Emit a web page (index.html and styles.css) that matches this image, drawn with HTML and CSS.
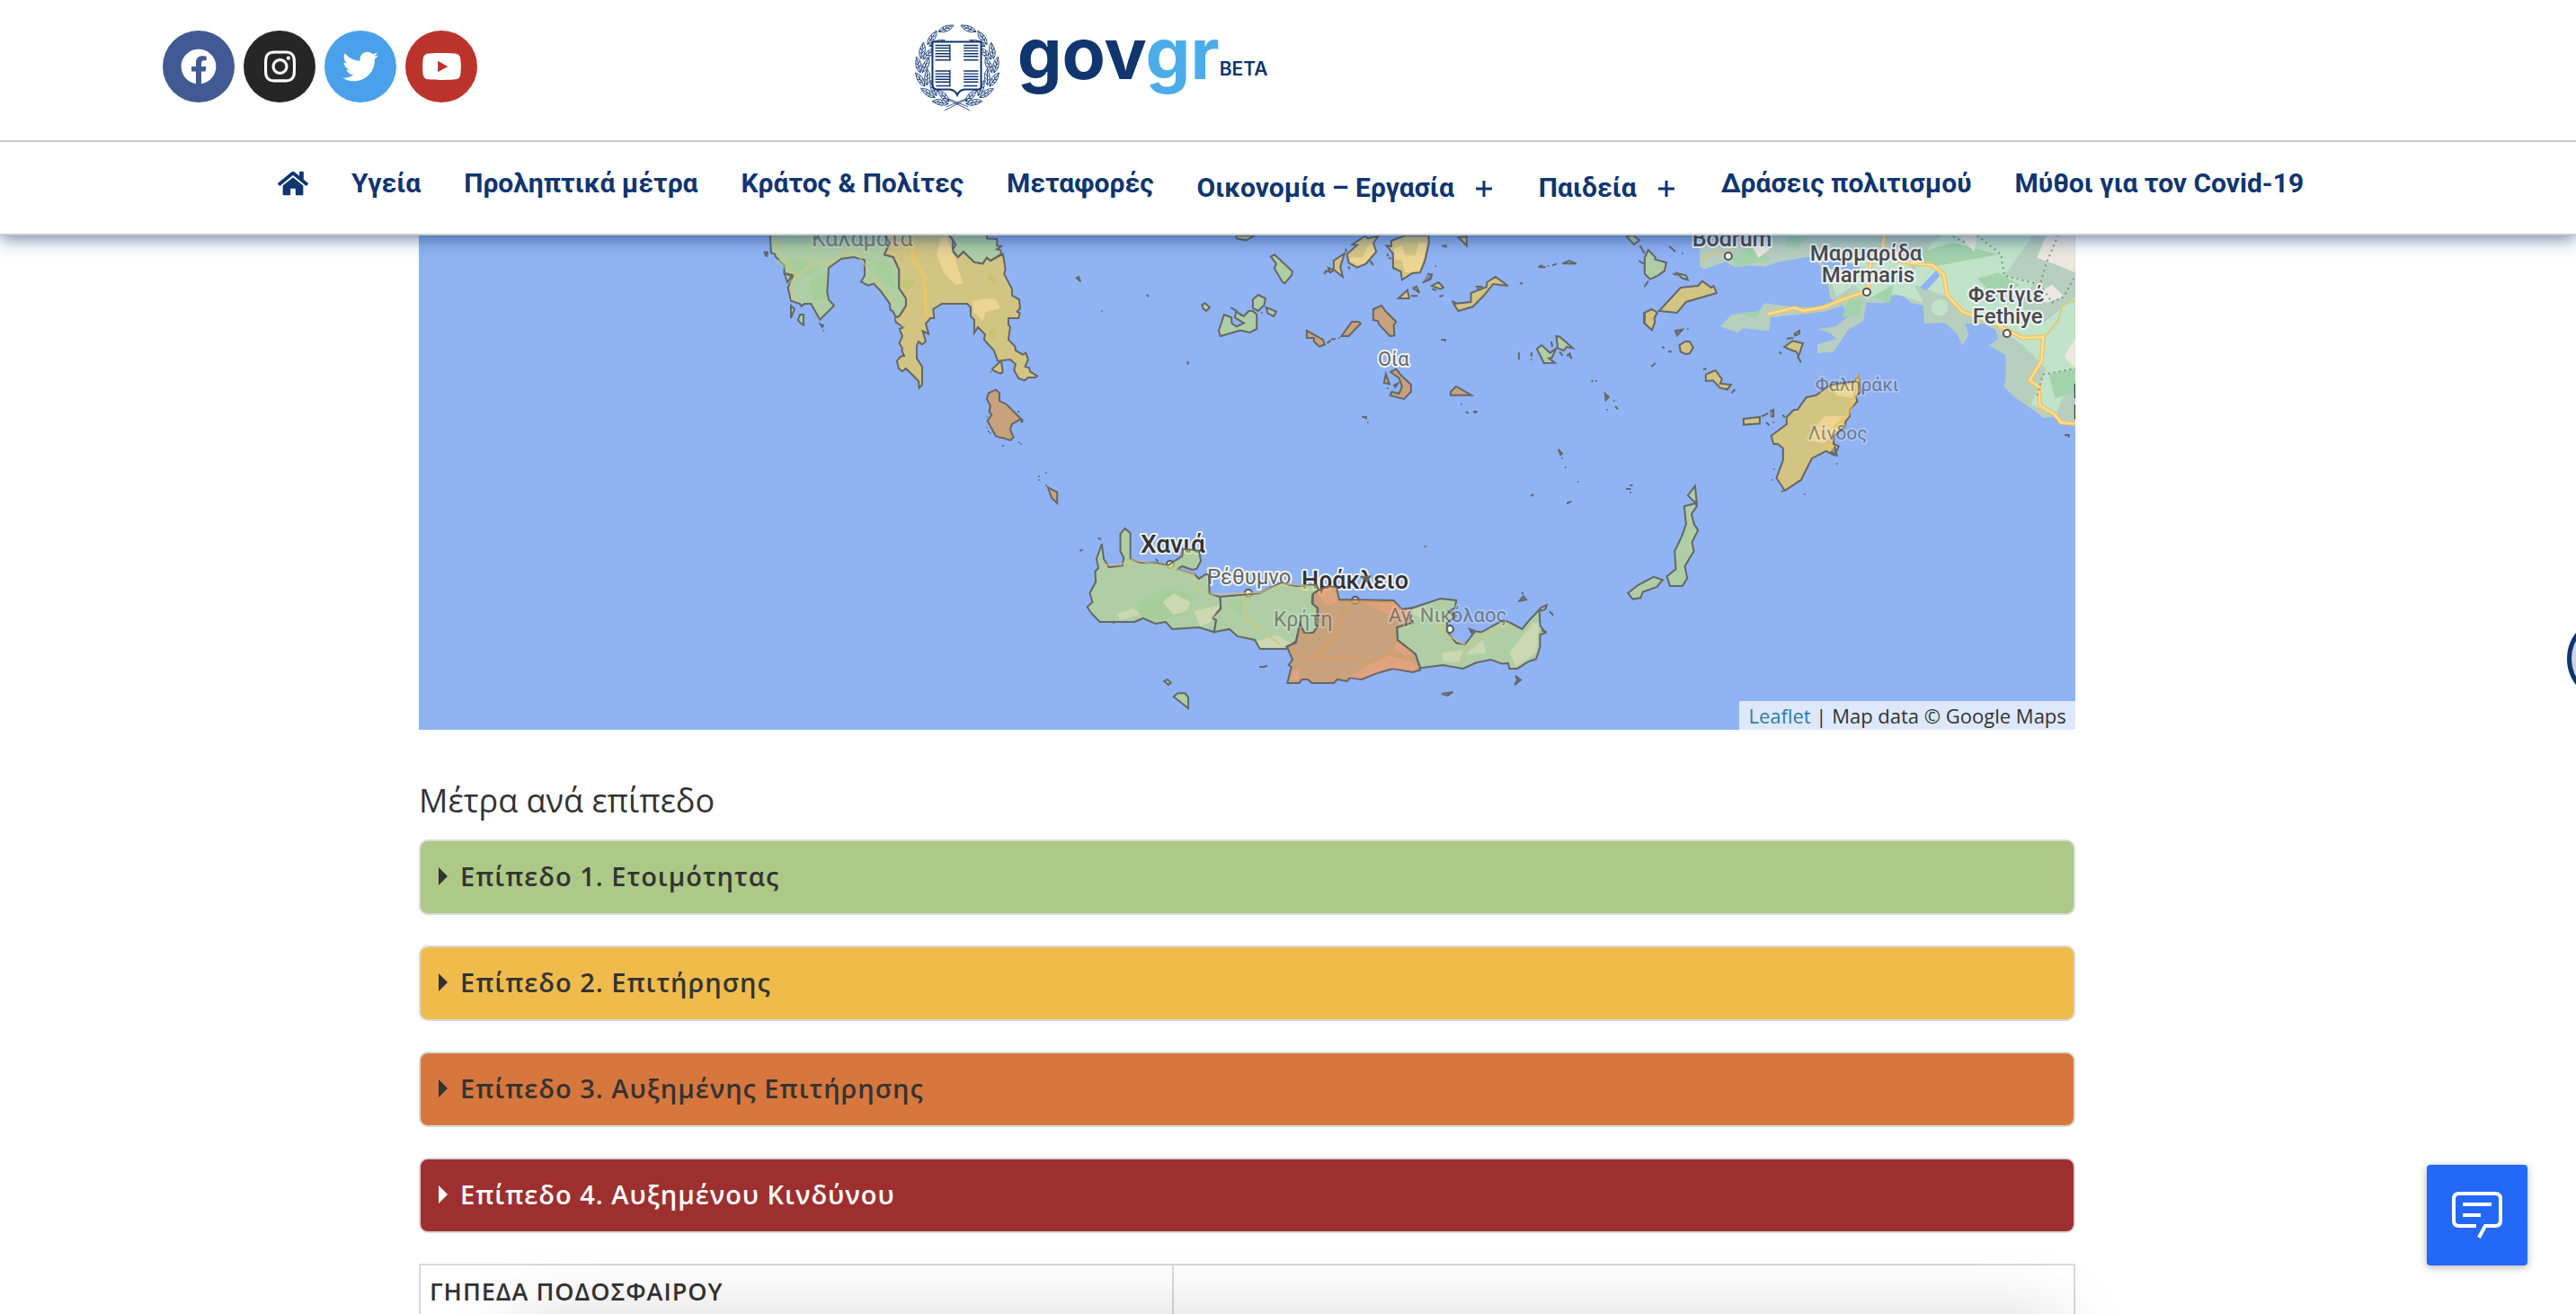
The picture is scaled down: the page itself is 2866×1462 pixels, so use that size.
FILE: index.html
```html
<!DOCTYPE html>
<html lang="el">
<head>
<meta charset="utf-8" />
<meta name="viewport" content="width=device-width, initial-scale=1" />
<title>Μέτρα ανά επίπεδο - govgr</title>
<link rel="stylesheet" href="styles.css">
</head>
<body>
<header class="site-header">
<div class="header-top">
<div class="social">
<a class="social-link facebook" href="#" aria-label="Facebook"><svg viewBox="0 0 512 512"><path d="M504 256C504 119 393 8 256 8S8 119 8 256c0 123.780 90.690 226.380 209.250 245V327.690h-63V256h63v-54.640c0-62.150 37-96.480 93.670-96.480 27.140 0 55.520 4.840 55.520 4.840v61h-31.280c-30.800 0-40.410 19.120-40.410 38.730V256h68.780l-11 71.690h-57.780V501C413.310 482.380 504 379.780 504 256z"/></svg></a>
<a class="social-link instagram" href="#" aria-label="Instagram"><svg viewBox="0 0 448 512"><path d="M224.100 141c-63.600 0-114.900 51.300-114.900 114.900s51.300 114.900 114.900 114.900S339 319.500 339 255.900 287.700 141 224.100 141zm0 189.600c-41.100 0-74.700-33.500-74.700-74.700s33.500-74.700 74.700-74.700 74.700 33.500 74.700 74.700-33.600 74.700-74.700 74.700zm146.400-194.300c0 14.900-12 26.800-26.800 26.800-14.900 0-26.800-12-26.800-26.800s12-26.800 26.800-26.800 26.800 12 26.800 26.800zm76.100 27.200c-1.700-35.900-9.900-67.700-36.200-93.900-26.200-26.200-58-34.400-93.900-36.200-37-2.100-147.900-2.100-184.900 0-35.800 1.700-67.600 9.900-93.900 36.100s-34.400 58-36.200 93.900c-2.100 37-2.100 147.900 0 184.900 1.700 35.900 9.900 67.700 36.200 93.900s58 34.400 93.900 36.200c37 2.100 147.900 2.100 184.900 0 35.900-1.700 67.700-9.900 93.900-36.200 26.200-26.200 34.400-58 36.200-93.900 2.100-37 2.100-147.800 0-184.800zM398.800 388c-7.800 19.600-22.900 34.700-42.600 42.600-29.500 11.700-99.500 9-132.100 9s-102.700 2.600-132.100-9c-19.600-7.800-34.700-22.900-42.600-42.600-11.700-29.500-9-99.500-9-132.100s-2.600-102.700 9-132.100c7.800-19.600 22.900-34.700 42.600-42.600 29.500-11.700 99.500-9 132.100-9s102.700-2.600 132.100 9c19.600 7.800 34.700 22.900 42.600 42.600 11.700 29.500 9 99.500 9 132.100s2.700 102.700-9 132.100z"/></svg></a>
<a class="social-link twitter" href="#" aria-label="Twitter"><svg viewBox="0 0 512 512"><path d="M459.370 151.716c.325 4.548.325 9.097.325 13.645 0 138.720-105.583 298.558-298.558 298.558-59.452 0-114.680-17.219-161.137-47.106 8.447.974 16.568 1.299 25.340 1.299 49.055 0 94.213-16.568 130.274-44.832-46.132-.975-84.792-31.188-98.112-72.772 6.498.974 12.995 1.624 19.818 1.624 9.421 0 18.843-1.300 27.614-3.573-48.081-9.747-84.143-51.980-84.143-102.985v-1.299c13.969 7.797 30.214 12.670 47.431 13.319-28.264-18.843-46.781-51.005-46.781-87.391 0-19.492 5.197-37.360 14.294-52.954 51.655 63.675 129.300 105.258 216.365 109.807-1.624-7.797-2.599-15.918-2.599-24.040 0-57.828 46.782-104.934 104.934-104.934 30.213 0 57.502 12.670 76.670 33.137 23.715-4.548 46.456-13.320 66.599-25.340-7.798 24.366-24.366 44.833-46.132 57.827 21.117-2.273 41.584-8.122 60.426-16.243-14.292 20.791-32.161 39.308-52.628 54.253z"/></svg></a>
<a class="social-link youtube" href="#" aria-label="YouTube"><svg viewBox="0 0 576 512"><path d="M549.655 124.083c-6.281-23.650-24.787-42.276-48.284-48.597C458.781 64 288 64 288 64S117.220 64 74.629 75.486c-23.497 6.322-42.003 24.947-48.284 48.597-11.412 42.867-11.412 132.305-11.412 132.305s0 89.438 11.412 132.305c6.281 23.650 24.787 41.500 48.284 47.821C117.220 448 288 448 288 448s170.780 0 213.371-11.486c23.497-6.321 42.003-24.171 48.284-47.821 11.412-42.867 11.412-132.305 11.412-132.305s0-89.438-11.412-132.305zm-317.510 213.508V175.185l142.739 81.205-142.739 81.201z"/></svg></a>
</div>
<a class="logo" href="#">
<svg class="emblem" viewBox="0 0 96 96" aria-hidden="true">
<defs>
<g id="leaf"><path d="M-9 0Q-3-6 9-1Q1 6-9 0ZM-9 0L7-1M-4 0l2-3M-1 0l3-3M-3 0l3 2M1 0l3 1"/></g>
<g id="pair"><use href="#leaf" transform="translate(48 6) rotate(-14)"/><use href="#leaf" transform="translate(48 14) rotate(22)"/></g>
<g id="branch">
<use href="#leaf" transform="translate(36 6) rotate(-20)"/>
<use href="#pair" transform="rotate(-40 48 48)"/>
<use href="#pair" transform="rotate(-64 48 48)"/>
<use href="#pair" transform="rotate(-86 48 48)"/>
<use href="#pair" transform="rotate(-108 48 48)"/>
<use href="#pair" transform="rotate(-131 48 48)"/>
<use href="#pair" transform="rotate(-154 48 48)"/>
<path d="M34 95l28-14M36 91l22-9"/>
</g>
</defs>
<g class="wreath"><use href="#branch"/><use href="#branch" transform="translate(96 0) scale(-1 1)"/></g>
<path class="shield" d="M21 20H74V69Q74 72 70 72H56Q50 73 48 78Q46 73 40 72H26Q21 72 21 66Z"/>
<path class="stripes" d="M24 24h16M24 27h16M24 30h16M24 33h16M24 36h16M24 40h16M55 24h16M55 27h16M55 30h16M55 33h16M55 36h16M55 40h16M24 52h16M24 55h16M24 58h16M24 61h16M24 64h16M25 68h15M55 52h16M55 55h16M55 58h16M55 61h16M55 64h16M55 68h15M40 23v18M40 51v18"/>
</svg>
<span class="logo-text">gov<span class="logo-light">gr</span></span><span class="logo-beta">BETA</span>
</a>
</div>
<nav class="main-nav">
<ul>
<li><a href="#" aria-label="Αρχική"><svg class="home-icon" viewBox="0 0 576 512"><path d="M280.370 148.260L96 300.110V464a16 16 0 0 0 16 16l112.060-.290a16 16 0 0 0 15.920-16V368a16 16 0 0 1 16-16h64a16 16 0 0 1 16 16v95.640a16 16 0 0 0 16 16.050L464 480a16 16 0 0 0 16-16V300L295.670 148.260a12.190 12.190 0 0 0-15.300 0zM571.600 251.470L488 182.560V44.050a12 12 0 0 0-12-12h-56a12 12 0 0 0-12 12v72.610L318.470 43a48 48 0 0 0-61 0L4.340 251.470a12 12 0 0 0-1.600 16.900l25.500 31A12 12 0 0 0 45.150 301l235.220-193.740a12.190 12.190 0 0 1 15.300 0L530.900 301a12 12 0 0 0 16.900-1.600l25.500-31a12 12 0 0 0-1.700-16.930z"/></svg></a></li>
<li><a href="#">Υγεία</a></li>
<li><a href="#">Προληπτικά μέτρα</a></li>
<li><a href="#">Κράτος &amp; Πολίτες</a></li>
<li><a href="#">Μεταφορές</a></li>
<li class="has-sub"><a href="#">Οικονομία – Εργασία<svg class="plus" viewBox="0 0 18 18"><path d="M9 0V18M0 9H18"/></svg></a></li>
<li class="has-sub"><a href="#">Παιδεία<svg class="plus" viewBox="0 0 18 18"><path d="M9 0V18M0 9H18"/></svg></a></li>
<li><a href="#">Δράσεις πολιτισμού</a></li>
<li><a href="#">Μύθοι για τον Covid-19</a></li>
</ul>
</nav>
</header>

<main>
<div class="map">
<svg viewBox="0 0 1843 550" role="img" aria-label="Χάρτης επιπέδων">
<!-- Turkish coast -->
<g transform="translate(1364 -12) scale(.3333)">
<path class="land" d="M180 30L186 140 200 150 230 138 270 124 300 142 350 136 400 140 440 126 520 112 556 106 600 150 612 200 620 245 640 262 600 276 500 275 400 262 380 290 290 300 252 340 310 360 330 346 415 355 420 310 600 290 660 270 680 306 640 340 578 348 620 362 640 380 576 400 578 430 630 424 680 350 730 320 740 260 800 262 820 240 850 228 890 262 930 270 932 330 1000 328 1040 360 1060 402 1082 370 1070 330 1130 330 1170 350 1180 380 1150 404 1205 436 1205 520 1198 540 1240 580 1300 620 1330 645 1370 640 1400 665 1437 665V30Z"/>
<path class="land-light" d="M610 150L700 110 840 100 900 150 960 60 1000 30H1300L1200 170 1300 190 1250 270 1330 330 1437 240V480L1370 640 1290 600 1340 480 1260 400 1160 330 1080 300 1010 240 900 200 930 262 870 240 800 226 740 250 700 200 640 240Z"/>
<path class="land-dark" d="M760 240L830 200 820 262ZM890 100L1030 60 1180 100 960 140ZM290 110L360 70 420 116 300 140ZM480 36L540 40 510 80 470 70ZM1110 180L1180 160 1250 200 1180 250ZM680 250L730 250 720 300 660 310ZM310 296L386 288 370 312ZM1350 500L1437 480V560L1370 580Z"/>
<path class="land-sand" d="M1340 36L1437 36 1437 160 1390 140 1310 110ZM1400 440L1437 380V480ZM1310 230L1360 200 1400 240 1340 260ZM350 60L420 80 380 110ZM1050 40L1110 36 1100 90Z"/>
<path class="water" d="M975 150L985 172 940 220 918 210ZM560 106L640 110 720 140 700 180 640 160Z"/>
<circle class="land-light" cx="985" cy="276" r="28"/>
<path class="road-edge" d="M800 36L795 80 755 120 745 220 660 250 600 275 530 288 500 278 412 298M800 110L900 130 960 135 998 165 1010 235 1060 290 1180 335 1260 378 1330 375 1325 455 1285 520 1315 540 1320 605 1365 630 1390 660 1437 665"/>
<path class="road" d="M800 36L795 80 755 120 745 220 660 250 600 275 530 288 500 278 412 298M800 110L900 130 960 135 998 165 1010 235 1060 290 1180 335 1260 378 1330 375 1325 455 1285 520 1315 540 1320 605 1365 630 1390 660 1437 665"/>
<path class="road-thin" d="M186 130L200 110 245 90 278 96 305 74M1340 370L1380 320 1395 270 1437 250"/>
<path class="border" d="M1110 36L1190 100 1200 170 1320 200 1340 130 1380 36M1320 200L1360 260 1400 240 1437 170M1310 570L1330 500 1437 480M1030 40L1070 60"/>
<path class="edge-mark" d="M1437 530V580M1437 600V650"/>
</g>
<g class="labels">
<text x="1417" y="12" font-size="25">Bodrum</text>
<text x="1548" y="28" font-size="24">Μαρμαρίδα</text>
<text x="1561" y="52" font-size="24">Marmaris</text>
<text x="1724" y="74" font-size="24">Φετίγιέ</text>
<text x="1729" y="98" font-size="24">Fethiye</text>
<text class="minor" x="1067" y="145" font-size="22">Οία</text>
<text class="major" x="803" y="353" font-size="28">Χανιά</text>
<text class="minor" x="877" y="388" font-size="24">Ρέθυμνο</text>
<text class="major" x="982" y="393" font-size="27">Ηράκλειο</text>
</g>
<g class="towns">
<circle cx="1457" cy="23" r="4"/><circle cx="1611" cy="63" r="4"/><circle cx="1767" cy="109" r="4"/>
<circle cx="836" cy="366" r="4"/><circle cx="923" cy="398" r="4"/><circle cx="1042" cy="406" r="4"/><circle cx="1147" cy="438" r="4"/>
</g>
<!-- Peloponnese, Kythira -->
<g class="regions" transform="translate(364 -12) scale(.3333)">
<path class="lvl1" d="M80 30L84 94 96 98 100 108 128 136 128 162 158 168 150 190 140 210 150 254 180 264 185 272 195 264 217 264 247 317 294 270 276 250 271 224 276 144 318 114 360 108 396 118 396 170 384 190 408 203 426 197 450 222 480 264 482 285 490 288 500 308 512 305 528 285 534 270 534 246 511 212 511 150 492 108 462 100 480 62 462 30Z"/>
<path class="lvl2" d="M462 30L480 62 462 100 492 108 511 150 511 212 534 246 534 270 512 305 498 312 500 325 526 342 512 348 522 372 512 396 522 412 520 420 528 438 516 440 504 455 510 480 522 490 534 480 576 522 578 545 588 535 588 474 570 446 570 405 576 390 588 400 600 390 590 355 610 365 600 330 616 312 628 312 625 282 654 264 738 264 750 275 750 305 762 318 762 362 774 342 798 366 795 384 828 420 840 455 882 450 900 466 895 486 910 513 930 520 942 510 966 510 972 505 948 490 946 478 932 474 942 450 934 428 924 434 900 420 898 406 876 384 882 342 876 334 876 312 910 312 914 295 905 290 915 280 912 250 888 236 888 215 862 165 866 150 858 98 816 120 804 110 790 130 762 125 726 90 708 108 690 90 690 50 675 30Z"/>
<path class="lvl1" d="M675 30L690 50 700 66 690 85 708 108 726 90 762 125 790 130 804 110 816 120 852 98 850 85 838 82 852 72 838 70 838 48 804 46 804 30Z"/>
<path class="lvl2" d="M822 482L846 460 853 460 857 492 850 497 828 488Z"/>
<path class="lvl3" d="M810 562L834 551 846 562 846 588 870 600 918 648 888 666 882 684 893 710 882 720 858 712 846 710 834 706 806 655 820 635 812 624 816 605 804 582Z"/>
<path class="lvl3" d="M1008 877L1039 893V930L1020 912Z"/>
<path class="lvl1" d="M174 318L180 300 192 300V335L178 324ZM150 270L162 282 150 312ZM128 162L152 172 138 192Z"/>
<path d="M62 92L72 92 70 104 66 104ZM248 332L258 336 254 342ZM1104 178L1110 174 1117 190ZM1337 234L1345 240M1475 455V467M1186 288h4M256 353h4M1000 828h4M976 840h4M976 852h4M1000 870h4M803 642h3M803 678h3M808 690h4M813 696h4M907 624h6M855 738h5M909 726h4M916 732h4M915 650L925 660M919 660L923 648M815 491h4"/>
</g>
<g class="relief" transform="translate(364 -12) scale(.3333)">
<path class="peach" d="M650 42L668 36 690 90 724 196 700 200 660 160 636 100ZM755 255L800 246 835 250 848 278 800 292 790 322 760 290Z"/>
<path class="olive" d="M515 180L565 185 550 215 515 205ZM808 160L836 185 835 200 808 180ZM810 360L820 346 835 350 830 380 812 382Z"/>
<path class="moss" d="M90 120L160 110 250 140 220 170 150 160ZM400 110L480 130 500 210 470 200ZM210 190L265 160 268 250 230 250Z"/>
<path class="road" d="M550 36L560 120 595 170 600 280 608 305"/>
<path class="road-thin" d="M92 36L105 80 165 175 150 190 154 252M165 175L228 128 290 124 330 94 380 86M330 80L380 110 430 180 500 270M500 312L528 342 600 318 618 290"/>
</g>
<!-- Cyclades -->
<g class="regions" transform="translate(864 -12) scale(.3333)">
<path class="lvl1" d="M252 106L264 100 324 156 322 168 298 196 290 190 264 146 270 130ZM22 268L32 262 48 276 36 288 26 280ZM192 250L210 234 234 246 230 268 210 288 192 278ZM236 276L270 290 262 306 242 296ZM96 300L120 310 122 330 138 340 162 328 132 310 136 290 162 306 178 288 192 288 205 300V348L182 360 150 353 84 372 78 354ZM1140 414L1156 402 1184 428 1204 414 1190 444 1180 446 1200 461 1164 462ZM1205 372L1217 374 1260 412 1240 408 1230 420 1210 412ZM1225 130L1248 120 1272 130ZM1440 40L1460 34 1482 52 1464 66ZM137 36V46L170 52 198 36Z"/>
<path class="lvl2" d="M506 98L540 68 524 66 566 38 576 46 610 38 594 62 604 90 570 130 540 143 512 128ZM462 120L498 96 484 140 492 174 462 150ZM654 54L700 36H778L780 60 766 122 750 160 724 162 690 184 686 156 660 144V96L638 70 654 72ZM678 246L708 218 714 246ZM728 212L738 206 748 228ZM790 204L812 192 828 210 818 215ZM878 42L906 40 906 70ZM862 264L920 258 920 228 972 208 974 192 1002 174 1044 204 994 198 962 238 926 274 878 288ZM444 144L462 152 450 160Z"/>
<path class="lvl3" d="M594 282L622 270 634 288 670 324 662 336 665 370 650 372 612 332 610 322 594 318ZM372 354L426 384 432 400 414 407 396 390V378H372ZM522 324H546L552 330 512 372H488ZM652 492L670 482 684 500 720 534V558L696 582 650 570 656 558 680 564 690 540 680 512ZM630 528L636 498 648 532ZM852 558L870 540 922 569H852Z"/>
<path d="M430 164L436 154 448 156M765 190L785 180M775 164L790 166 785 182 758 194M790 215L805 218M815 240L828 236M720 238h22M642 96v10M645 112h10M800 138h4M822 70L840 74M833 66L838 76M820 384L834 384V390M556 642H570V650M574 660h4M440 396L452 386M454 382H468M478 378h4M664 536L676 530 668 542ZM640 546h4M886 600h4M904 624L912 630M928 624H942M935 624V630M856 255L872 262M936 206L960 208M940 214L956 216M1145 142L1170 142M1146 140L1160 136M1176 138h4M1192 136L1206 130M1084 194L1092 198M1080 426V450M1122 426V440M1122 448v4M1216 424L1226 438M1240 438L1250 430 1256 448M1188 390L1192 408M1322 522h6M1336 522h5M1368 564L1380 576 1370 586ZM1396 588h4M1402 606L1410 616M1372 618h4M1212 750L1224 764 1220 768ZM1222 780h4M1234 810h4M1276 858h4M1120 906L1130 900M1240 930L1256 924M1438 882H1454M1450 870h10M1450 894h5M1498 292V330M1480 120L1500 132M1484 70L1500 96M1498 208h2M118 276L140 290M146 296L154 304M220 294h4M584 120L594 136M510 140L516 148M500 80L506 90"/>
</g>
<g class="relief" transform="translate(864 -12) scale(.3333)">
<path class="peach" d="M590 60L600 90 566 128 545 136 515 120 520 108 560 110 575 70ZM664 80L690 70 700 100 735 104 745 60 774 60 760 122 748 154 722 158 700 160 690 120 664 115Z"/>
</g>
<!-- Dodecanese -->
<g class="regions" transform="translate(1364 -12) scale(.3333)">
<path class="lvl1" d="M0 110L12 84 36 110 34 116 72 126 66 154 44 170 18 182 0 164ZM108 162L138 170 144 184 124 178ZM144 904L168 872 174 930 160 920ZM132 940L170 930 174 940 156 966 165 1000 178 1020 158 1060 164 1090 134 1140 142 1180 126 1206 84 1206 74 1174 104 1150 100 1090 124 1040 138 1000ZM-56 1230L-24 1204 30 1176 60 1186 40 1210 -6 1226 -14 1246 -40 1250Z"/>
<path class="lvl2" d="M48 288L120 210 178 204 192 188 222 210 230 204 240 228 138 258 108 294ZM0 294L24 282 42 294 32 312 34 326 24 352 0 330ZM116 402L136 390 150 390 162 410 150 430 136 432 120 424ZM204 500L236 486 258 516 252 530 288 534 276 550 252 545 228 520 204 522ZM466 408L494 388 528 396 514 438 506 424 478 414ZM500 364L516 354 516 364 502 370ZM330 648L384 642V664L330 668ZM422 705L474 666V642L498 618H510L540 576 570 570 624 534 702 522 714 504 722 558 704 574 710 590 684 618V640L672 654 668 676 632 706 630 732 648 740 634 770 606 756 558 780 522 852 468 888 440 846 462 786V746L444 732H430Z"/>
<path d="M82 72L102 90M124 96h4M58 408L66 412M78 424H90M22 474L36 462M102 354L126 350 108 370ZM142 348h4M196 484L206 480M290 562L302 550M450 424L456 432M510 440L522 460M474 380L496 378M390 640L412 630M418 624L430 618V640H420M406 660L416 670M428 660h4M460 634L468 644M620 758L642 770 634 740M640 798h4M532 900h4M430 816h4M424 852h4M456 890h8M1402 702H1416V710M94 164L108 168M0 206L12 188"/>
</g>
<g class="relief" transform="translate(1364 -12) scale(.3333)">
<path class="peach" d="M630 540L702 528 716 555 700 580 640 570ZM560 690L600 640 670 640 640 690 600 730 545 720Z"/>
<path class="road" d="M714 500L700 580 675 640 630 680M600 745L628 735"/>
</g>
<!-- Crete -->
<g class="regions" transform="translate(714 298) scale(.37 .3333)">
<path class="lvl1" d="M124 136L130 186 146 214 186 208 190 182 180 160V102L194 84 210 100V186L240 198 288 200 322 208 366 176 368 152 416 158 422 192 410 218 396 222 366 210 352 220 402 236 416 252 438 236 446 240 448 302 480 312 482 352 456 382 468 390 462 430 416 414 336 420 316 396 286 402 248 384 222 396H118L92 366 80 346 96 330 88 300 106 262 104 228 114 216 108 186Z"/>
<path class="lvl1" d="M480 312L598 300 662 266 708 276 770 272 776 288 758 304 756 332 772 348 772 414 760 432H730L720 402 708 460 678 486H600L584 456 532 444 508 420 462 430 468 390 456 382 482 352Z"/>
<path class="lvl3" d="M776 290L806 276 830 280 838 322 890 322 1002 324 1026 354 1056 350 1052 388 1060 398 1012 414 1014 456 1068 504 1082 556 1060 564 1000 552 950 568 906 588 870 582 862 594 832 588 822 600H756L744 588 726 588 718 600H682L694 546 686 540 698 522 680 478 708 466 720 402 734 432H760L772 414 774 350 758 336 760 302Z"/>
<path class="lvl1" d="M1026 354L1062 348 1142 318 1190 324 1186 350 1166 360 1186 380 1162 400 1164 430 1190 466 1216 472 1246 428 1266 430 1332 390 1354 400 1388 420 1410 390 1446 348 1462 340 1458 354 1440 360 1442 408 1458 432 1442 438V480L1430 520 1404 530 1374 552H1350L1346 534 1328 536 1294 522 1250 532 1210 552 1150 540 1082 550 1068 504 1014 456 1012 414 1060 398 1052 388 1056 350Z"/>
<path class="lvl1" d="M340 646L352 634H374L384 648V684ZM312 594L322 588 332 600 324 606Z"/>
<path d="M58 160L66 154M112 116L122 120M286 186L294 194M598 546H612L622 542M1146 636L1180 630 1164 642ZM1380 326L1392 310 1400 322ZM1386 300h6M1368 576L1384 590 1366 606 1374 590ZM1470 360L1482 374M1230 420L1242 424 1236 432ZM1094 144h5M1522 0h6M1446 424L1462 430M158 400h4M1172 356L1190 378M906 246L930 244 922 260Z"/>
</g>
<g class="relief" transform="translate(714 298) scale(.37 .3333)">
<path class="moss" d="M230 330L320 280 400 310 380 370 300 390 220 370ZM500 330L560 320 540 370Z"/>
<path class="sand" d="M306 330L340 300 392 330 380 360 340 372ZM170 370L220 350 240 372 180 390ZM400 360L480 340 450 400 420 410ZM590 460L650 440 690 465 670 482H600ZM1145 500L1210 490 1200 530 1150 530ZM1350 500L1420 400 1440 400 1430 500 1370 545ZM1220 505L1270 455 1280 500ZM1020 360L1100 345 1080 380Z"/>
<path class="rust" d="M860 580L930 540 1000 500 1080 545 1060 560 990 550 900 585ZM700 560L718 550 716 590H690ZM900 325L1000 328 1026 360 1050 360 1040 395 1000 380ZM1010 460L1060 500 1040 510 1000 490ZM770 300L820 285 835 330 800 340Z"/>
<path class="road-thin" d="M130 205L180 206 210 188 320 210 400 235 405 280 450 305 600 298 670 268 760 278M550 310L560 390 660 470M1110 380L1165 440 1220 475 1350 400M1220 480L1200 530"/>
<path class="road-orange" d="M858 340L830 430 775 510M690 500L730 512 880 515 910 535 990 505 1060 525M835 330H1000L1030 360"/>
</g>
<!-- place names lying under the coloured regions -->
<g class="labels covered">
<text x="437" y="12" font-size="25">Καλαμάτα</text>
<text x="1554" y="173" font-size="21">Φαληράκι</text>
<text x="1546" y="227" font-size="21">Λίνδος</text>
<text x="951" y="435" font-size="23">Κρήτη</text>
<text x="1079" y="430" font-size="22">Αγ. Νικόλαος</text>
</g>
</svg>
<div class="attribution"><a href="#">Leaflet</a> | Map data © Google Maps</div>
</div>

<h2>Μέτρα ανά επίπεδο</h2>
<details class="level level-1"><summary>Επίπεδο 1. Ετοιμότητας</summary></details>
<details class="level level-2"><summary>Επίπεδο 2. Επιτήρησης</summary></details>
<details class="level level-3"><summary>Επίπεδο 3. Αυξημένης Επιτήρησης</summary></details>
<details class="level level-4"><summary>Επίπεδο 4. Αυξημένου Κινδύνου</summary></details>

<table class="measures">
<tbody>
<tr><th scope="row">ΓΗΠΕΔΑ ΠΟΔΟΣΦΑΙΡΟΥ</th><td></td></tr>
</tbody>
</table>
</main>

<button class="side-button" type="button" aria-label="Προσβασιμότητα"></button>
<div class="bottom-bar"></div>
<button class="chat-button" type="button" aria-label="Συνομιλία">
<svg viewBox="0 0 56 52"><path d="M27 38H8Q2 38 2 32V8Q2 2 8 2H48Q54 2 54 8V32Q54 38 48 38H37L30 51M12 14H44M12 26H32"/></svg>
</button>
</body>
</html>
```

FILE: styles.css
```css
:root {
--navy: #10356f;
--light-blue: #4bace9;
--text: #333333;
--line: #d9d9d9;
--sea: #90b3f3;
}
* {
box-sizing: border-box;
}
body {
margin: 0;
height: 100vh;
overflow: hidden;
background: #fff;
color: var(--text);
font-family: "Open Sans", "Noto Sans", sans-serif;
}
a {
text-decoration: none;
}
.site-header {
position: relative;
z-index: 2;
background: #fff;
border-bottom: 2px solid #ccc;
box-shadow: 0 2px 20px rgba(16, 53, 111, 0.7);
}
.header-top {
display: grid;
grid-template-columns: 1fr 2fr;
height: 156px;
padding: 0 181px;
}
.social {
display: flex;
gap: 10px;
padding-top: 34px;
}
.social-link {
display: flex;
align-items: center;
justify-content: center;
width: 80px;
height: 80px;
border-radius: 50%;
}
.social-link svg {
height: 40px;
fill: #fff;
}
.facebook {
background: #415a93;
}
.instagram {
background: #262626;
}
.twitter {
background: #4aa0eb;
}
.youtube {
background: #bb342b;
}
.logo {
display: flex;
align-items: flex-start;
padding-top: 26px;
color: var(--navy);
font-family: Inter, sans-serif;
}
.emblem {
width: 98px;
height: 98px;
margin-right: 18px;
fill: none;
stroke: var(--navy);
}
.wreath {
stroke-width: 0.8;
}
.shield {
fill: #fff;
stroke-width: 2;
}
.stripes {
stroke-width: 1.4;
}
.logo-text {
font-size: 79px;
font-weight: 700;
line-height: 66px;
}
.logo-light {
color: var(--light-blue);
}
.logo-beta {
padding-top: 38px;
font-size: 21px;
font-weight: 600;
line-height: 26px;
}
.main-nav {
height: 104px;
border-top: 2px solid #ccc;
font-family: Roboto, sans-serif;
}
.main-nav ul {
display: flex;
justify-content: center;
gap: 48px;
margin: 0;
padding: 28px 0 0 6px;
list-style: none;
}
.main-nav a {
display: flex;
align-items: center;
color: var(--navy);
font-size: 30px;
font-weight: 700;
line-height: 36px;
white-space: nowrap;
}
.main-nav .has-sub {
padding-top: 5px;
}
.home-icon {
width: 34px;
height: 36px;
fill: var(--navy);
}
.plus {
width: 18px;
height: 18px;
margin: 2px 4px 0 24px;
fill: none;
stroke: var(--navy);
stroke-width: 3;
}
main {
width: 64.3%;
margin-left: 16.26%;
}
.map {
position: relative;
background: var(--sea);
}
.map svg {
display: block;
width: 100%;
}
.land {
fill: #b7cfbf;
}
.land-light {
fill: #c1e3c9;
}
.land-dark {
fill: #a3d3ab;
}
.land-sand {
fill: #ece8df;
}
.water {
fill: var(--sea);
}
.road-edge,
.road,
.road-thin,
.road-orange,
.border,
.edge-mark {
fill: none;
vector-effect: non-scaling-stroke;
}
.road-edge {
stroke: #f2c662;
stroke-width: 5;
}
.road {
stroke: #fae1a0;
stroke-width: 2;
}
.road-thin {
stroke: #dcc877;
stroke-width: 2;
}
.road-orange {
stroke: #e39a4c;
stroke-width: 2;
}
.border {
stroke: #85918c;
stroke-width: 2;
stroke-dasharray: 2 4;
}
.edge-mark {
stroke: #444;
stroke-width: 2;
}
.labels {
fill: #4a4a4a;
stroke: #eef3f6;
stroke-width: 4;
stroke-linejoin: round;
paint-order: stroke;
font-family: Roboto, sans-serif;
font-weight: 500;
}
.labels .minor {
fill: #666;
font-weight: 400;
}
.labels .major {
fill: #333;
}
.covered {
font-weight: 400;
stroke-opacity: 0.5;
opacity: 0.55;
}
.towns {
fill: #fff;
stroke: #555;
stroke-width: 2;
}
.regions path {
fill: #777;
fill-opacity: 0.65;
stroke: #666;
stroke-width: 2;
vector-effect: non-scaling-stroke;
}
.regions .lvl1 {
fill: #c0dd7b;
}
.regions .lvl2 {
fill: #f6cf47;
}
.regions .lvl3 {
fill: #e6993c;
}
.relief {
opacity: 0.6;
}
.peach {
fill: #ffdf9e;
}
.olive {
fill: #bcc565;
}
.moss {
fill: #a2cd94;
}
.sand {
fill: #e0e0ba;
}
.rust {
fill: #f0a581;
}
.relief .road {
stroke: #f9c65c;
stroke-width: 4;
}
.attribution {
position: absolute;
right: 0;
bottom: 0;
padding: 0 10px;
background: rgba(255, 255, 255, 0.7);
font-size: 22px;
line-height: 32px;
}
.attribution a {
color: #2f7ba6;
}
h2 {
margin: 54px 0 18px;
font-size: 36px;
font-weight: 400;
line-height: 50px;
}
.level {
margin-bottom: 34px;
border: 2px solid var(--line);
border-radius: 10px;
}
.level summary {
display: flex;
align-items: center;
gap: 14px;
height: 80px;
padding: 0 20px 2px;
font-size: 29px;
font-weight: 600;
letter-spacing: 1px;
cursor: pointer;
}
.level summary::before {
content: "";
width: 10px;
height: 20px;
background: currentColor;
clip-path: polygon(0 0, 100% 50%, 0 100%);
}
.level-1 {
background: #adc988;
}
.level-2 {
background: #efbc4c;
}
.level-3 {
background: #d7773d;
}
.level-4 {
background: #9d302f;
color: #fff;
}
.measures {
width: 100%;
border-collapse: collapse;
table-layout: fixed;
}
.measures th,
.measures td {
height: 90px;
padding: 10px;
border: 2px solid var(--line);
font-size: 27px;
font-weight: 600;
letter-spacing: 1px;
line-height: 38px;
text-align: left;
vertical-align: top;
}
.measures th {
width: 45.5%;
}
.side-button {
position: fixed;
top: 686px;
right: -84px;
width: 94px;
height: 94px;
border: 5px solid var(--navy);
border-radius: 50%;
background: #ccd5e2;
}
.bottom-bar {
position: fixed;
top: 100%;
left: 20%;
right: 20%;
height: 200px;
box-shadow: 0 0 80px rgba(0, 0, 0, 0.15);
}
.chat-button {
position: fixed;
right: 54px;
bottom: 54px;
display: flex;
align-items: center;
justify-content: center;
width: 112px;
height: 112px;
padding: 0;
border: 0;
border-radius: 4px;
background: #2368f6;
box-shadow: 0 2px 10px rgba(0, 0, 0, 0.3);
}
.chat-button svg {
width: 56px;
height: 52px;
fill: none;
stroke: #fff;
stroke-width: 4;
}
```
